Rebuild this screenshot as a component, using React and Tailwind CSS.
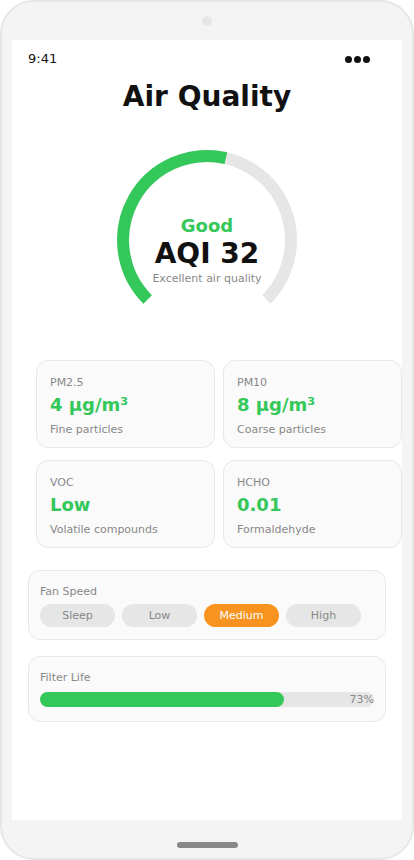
import { useState } from "react";

const cards = [
    { label: "PM2.5", value: "4 µg/m³", desc: "Fine particles" },
    { label: "PM10", value: "8 µg/m³", desc: "Coarse particles" },
    { label: "VOC", value: "Low", desc: "Volatile compounds" },
    { label: "HCHO", value: "0.01", desc: "Formaldehyde" },
];

const speeds = ["Sleep", "Low", "Medium", "High"];

function Gauge() {
    return (
        <div className="relative mx-auto mt-[26px] w-[200px] h-[200px]">
            <svg width="200" height="200" viewBox="0 0 200 200">
                <path d="M 40.6 159.4 A 84 84 0 1 1 159.4 159.4" fill="none" stroke="#e6e6e6" strokeWidth="12" />
                <path d="M 40.6 159.4 A 84 84 0 0 1 118.9 18.2" fill="none" stroke="#34c759" strokeWidth="12" />
            </svg>
            <div className="absolute inset-0 flex flex-col items-center pt-[75px]">
                <div className="text-[18px] leading-[22px] font-bold text-[#34c759]">Good</div>
                <div className="text-[28px] leading-[34px] font-bold text-[#111]">AQI 32</div>
                <div className="mt-[1px] text-[11px] leading-[13px] text-[#888]">Excellent air quality</div>
            </div>
        </div>
    );
}

export default function App() {
    const [speed, setSpeed] = useState("Medium");
    const filter = 73;

    return (
        <div className="w-[414px] h-[860px] bg-[#f4f4f4] border-2 border-[#e6e6e6] rounded-[34px] flex flex-col items-center overflow-hidden" style={{ fontFamily: '"DejaVu Sans", sans-serif' }}>
            <div className="mt-[14px] w-[10px] h-[10px] rounded-full bg-[#e6e6e6]"></div>
            <div className="mt-[14px] w-[390px] h-[780px] bg-white flex flex-col">
                <div className="flex justify-between items-center pl-4 pr-8 pt-[10px]">
                    <span className="text-[13px] leading-[18px] text-[#111]">9:41</span>
                    <div className="flex gap-[2px]">
                        <span className="w-[7px] h-[7px] rounded-full bg-[#111]"></span>
                        <span className="w-[7px] h-[7px] rounded-full bg-[#111]"></span>
                        <span className="w-[7px] h-[7px] rounded-full bg-[#111]"></span>
                    </div>
                </div>
                <h1 className="mt-[12px] text-center text-[28px] leading-[34px] font-bold text-[#111]">Air Quality</h1>

                <Gauge />

                <div className="px-4 flex flex-col">
                    <div className="mt-[20px] ml-2 w-[366px] grid grid-cols-2 gap-x-2 gap-y-3">
                        {cards.map((c) => (
                            <div key={c.label} className="h-[88px] bg-[#fafafa] border border-[#e8e8e8] rounded-[12px] px-[13px] pt-[15px] flex flex-col">
                                <div className="text-[11px] leading-[13px] text-[#888]">{c.label}</div>
                                <div className="mt-[5px] text-[18px] leading-[22px] font-bold text-[#34c759]">{c.value}</div>
                                <div className="mt-[7px] text-[11px] leading-[13px] text-[#888]">{c.desc}</div>
                            </div>
                        ))}
                    </div>

                    <div className="mt-[22px] bg-[#fafafa] border border-[#e8e8e8] rounded-[12px] px-[11px] pt-[14px] pb-[12px]">
                        <div className="text-[11px] leading-[13px] text-[#888]">Fan Speed</div>
                        <div className="mt-[6px] flex gap-[7px]">
                            {speeds.map((s) => (
                                <button
                                    key={s}
                                    onClick={() => setSpeed(s)}
                                    className={s === speed
                                        ? "w-[75px] h-[23px] rounded-full bg-[#f7931e] text-white text-[11px] leading-[23px]"
                                        : "w-[75px] h-[23px] rounded-full bg-[#e6e6e6] text-[#888] text-[11px] leading-[23px]"}>
                                    {s}
                                </button>
                            ))}
                        </div>
                    </div>

                    <div className="mt-[16px] bg-[#fafafa] border border-[#e8e8e8] rounded-[12px] px-[11px] pt-[14px] pb-[14px]">
                        <div className="text-[11px] leading-[13px] text-[#888]">Filter Life</div>
                        <div className="relative mt-[8px] h-[15px] rounded-full bg-[#e6e6e6]">
                            <div className="h-full rounded-full bg-[#34c759]" style={{ width: `${filter}%` }}></div>
                            <span className="absolute right-0 top-0 text-[11px] leading-[15px] text-[#888]">{filter}%</span>
                        </div>
                    </div>
                </div>
            </div>
            <div className="mt-[22px] w-[61px] h-[6px] rounded-full bg-[#888]"></div>
        </div>
    );
}
